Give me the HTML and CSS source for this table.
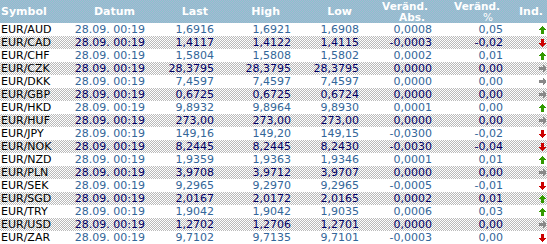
FILE: index.html
```html
<!DOCTYPE html>
<html lang="de">
<head>
    <meta charset="UTF-8">
    <title>Devisen</title>
    <link rel="stylesheet" href="styles.css">
</head>
<body>
    <table class="quotes">
        <colgroup>
            <col class="c-sym"><col class="c-date"><col class="c-last"><col class="c-high">
            <col class="c-low"><col class="c-abs"><col class="c-pct"><col class="c-ind">
        </colgroup>
        <thead>
            <tr>
                <th class="h-sym">Symbol</th>
                <th class="h-date">Datum</th>
                <th class="h-last">Last</th>
                <th class="h-high">High</th>
                <th class="h-low">Low</th>
                <th class="h-abs"><span class="line">Veränd.</span><span class="line sub-abs">Abs.</span></th>
                <th class="h-pct"><span class="line">Veränd.</span><span class="line sub-pct">%</span></th>
                <th class="h-ind">Ind.</th>
            </tr>
        </thead>
        <tbody id="rows"></tbody>
    </table>

    <svg width="0" height="0" class="defs">
        <defs>
            <symbol id="up" viewBox="0 0 7 8"><path d="M3 0h1v1h1v1h1v1h1v1H5v4H2V4H0V3h1V2h1V1h1z"/></symbol>
            <symbol id="down" viewBox="0 0 7 8"><path d="M2 0h3v4h2v1H6v1H5v1H4v1H3V7H2V6H1V5H0V4h2z"/></symbol>
            <symbol id="flat" viewBox="0 0 7 8"><path d="M0 2h4V0h1v1h1v1h1v3H6v1H5v1H4V5H0z"/></symbol>
        </defs>
    </svg>

    <script>
        // symbol, last, high, low, abs, pct, trend
        var quotes = [
            ['EUR/AUD', '1,6916', '1,6921', '1,6908', '0,0008', '0,05', 'up'],
            ['EUR/CAD', '1,4117', '1,4122', '1,4115', '-0,0003', '-0,02', 'down'],
            ['EUR/CHF', '1,5804', '1,5808', '1,5802', '0,0002', '0,01', 'up'],
            ['EUR/CZK', '28,3795', '28,3795', '28,3795', '0,0000', '0,00', 'flat'],
            ['EUR/DKK', '7,4597', '7,4597', '7,4597', '0,0000', '0,00', 'flat'],
            ['EUR/GBP', '0,6725', '0,6725', '0,6724', '0,0000', '0,00', 'flat'],
            ['EUR/HKD', '9,8932', '9,8964', '9,8930', '0,0001', '0,00', 'up'],
            ['EUR/HUF', '273,00', '273,00', '273,00', '0,0000', '0,00', 'flat'],
            ['EUR/JPY', '149,16', '149,20', '149,15', '-0,0300', '-0,02', 'down'],
            ['EUR/NOK', '8,2445', '8,2445', '8,2430', '-0,0030', '-0,04', 'down'],
            ['EUR/NZD', '1,9359', '1,9363', '1,9346', '0,0001', '0,01', 'up'],
            ['EUR/PLN', '3,9708', '3,9712', '3,9707', '0,0000', '0,00', 'flat'],
            ['EUR/SEK', '9,2965', '9,2970', '9,2965', '-0,0005', '-0,01', 'down'],
            ['EUR/SGD', '2,0167', '2,0172', '2,0165', '0,0002', '0,01', 'up'],
            ['EUR/TRY', '1,9042', '1,9042', '1,9035', '0,0006', '0,03', 'up'],
            ['EUR/USD', '1,2702', '1,2706', '1,2701', '0,0000', '0,00', 'flat'],
            ['EUR/ZAR', '9,7102', '9,7135', '9,7101', '-0,0003', '0,00', 'down']
        ];

        var html = '';
        quotes.forEach(function (q, i) {
            html += '<tr class="' + (i % 2 ? 'odd' : 'even') + '">' +
                '<td class="sym">' + q[0] + '</td>' +
                '<td class="num date">28.09. 00:19</td>' +
                '<td class="num">' + q[1] + '</td>' +
                '<td class="num">' + q[2] + '</td>' +
                '<td class="num">' + q[3] + '</td>' +
                '<td class="num">' + q[4] + '</td>' +
                '<td class="num">' + q[5] + '</td>' +
                '<td class="ind"><svg class="arrow ' + q[6] + '"><use href="#' + q[6] + '"/></svg></td>' +
                '</tr>';
        });
        document.getElementById('rows').innerHTML = html;
    </script>
</body>
</html>
```

FILE: styles.css
```css
body {
    margin: 0;
    background-color: #ffffff;
    font-family: 'DejaVu Sans', Verdana, sans-serif;
    font-size: 11px;
}

.defs {
    position: absolute;
}

.quotes {
    width: 547px;
    table-layout: fixed;
    border-collapse: collapse;
    border-spacing: 0;
}

.c-sym { width: 62px; }
.c-date { width: 88px; }
.c-last { width: 68px; }
.c-high { width: 77px; }
.c-low { width: 68px; }
.c-abs { width: 73px; }
.c-pct { width: 71px; }
.c-ind { width: 40px; }

/* header with the dithered teal pattern */
thead tr {
    height: 23px;
    background-color: #98bccc;
    background-image: repeating-conic-gradient(#86c6cc 0 25%, #acb2d4 0 50%);
    background-size: 2px 2px;
}

th {
    padding: 0;
    color: #ffffff;
    font-weight: bold;
    line-height: 13px;
    text-align: right;
    vertical-align: middle;
    white-space: nowrap;
}

th .line {
    display: block;
    height: 11px;
    line-height: 11px;
    font-size: 10.5px;
    overflow: hidden;
}

.h-sym { text-align: left; padding-left: 1px; }
.h-date { padding-right: 15px; }
.h-last { padding-right: 10px; }
.h-high { padding-right: 15px; }
.h-low { padding-right: 11px; }
.h-abs { padding-right: 8px; }
.h-pct { padding-right: 7px; }
.h-ind { padding-right: 4px; }

.sub-abs { padding-right: 3px; }
.sub-pct { padding-right: 7px; font-weight: normal; }

/* data rows */
tbody tr {
    height: 13px;
}

td {
    padding: 0;
    line-height: 13px;
    white-space: nowrap;
    overflow: hidden;
}

tr.even td {
    color: #336699;
}

tr.odd {
    background-color: #dcdcdc;
    background-image: repeating-conic-gradient(#bababa 0 25%, #ffffff 0 50%);
    background-size: 2px 2px;
}

tr.odd td {
    color: #000066;
}

td.sym {
    padding-left: 1px;
    color: #000000 !important;
}

td.num {
    text-align: right;
    padding-right: 4px;
}

td.date {
    padding-right: 5px;
}

td.ind {
    text-align: right;
    padding-right: 1px;
    line-height: 0;
}

.arrow {
    width: 7px;
    height: 8px;
    vertical-align: middle;
}

.arrow.up { fill: #339900; }
.arrow.down { fill: #cc0000; }
.arrow.flat { fill: #888888; }
```
